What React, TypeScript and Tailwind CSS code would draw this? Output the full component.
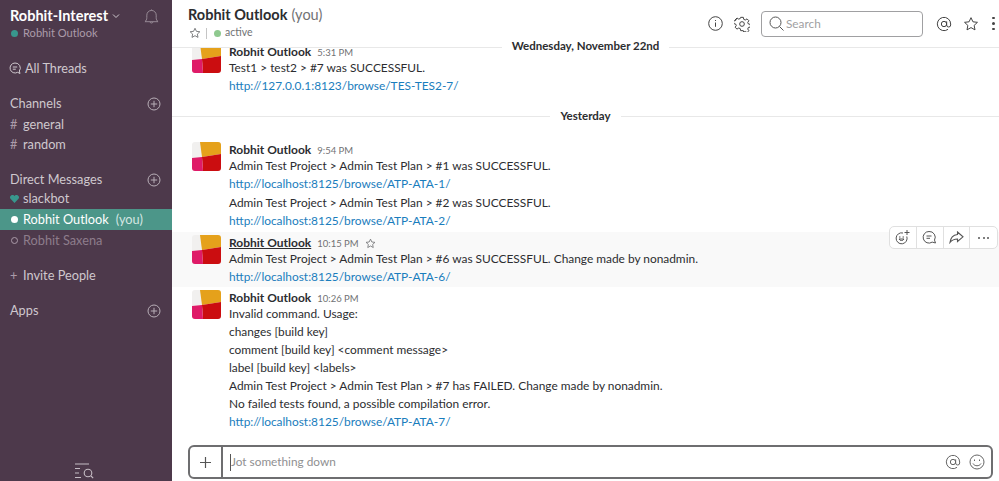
import React from "react";

const Plus = () => (
  <svg width="14" height="14" viewBox="0 0 14 14" fill="none" stroke="#b8aeb7" strokeWidth="1">
    <circle cx="7" cy="7" r="6" />
    <path d="M7 3.8v6.4M3.8 7h6.4" />
  </svg>
);

const Avatar = () => (
  <svg width="29" height="29" viewBox="0 0 29 29" className="shrink-0 rounded-[3px]">
    <rect width="29" height="29" fill="#f1f0ef" />
    <path d="M8 0H29V12L10 15Z" fill="#e5a11b" />
    <path d="M10 15L29 12V29H11Z" fill="#cb0d10" />
    <path d="M0 16L10 15L11 29H0Z" fill="#df1b68" />
  </svg>
);

function Lines({ lines }: { lines: { text: string; link?: boolean }[] }) {
  return (
    <>
      {lines.map((l) => (
        <div key={l.text} className={`text-[11.9px] leading-[18px] ${l.link ? "text-[#1a7dbd]" : "text-[#2c2d30]"}`}>{l.text}</div>
      ))}
    </>
  );
}

function Msg({ time, lines, hover, star }: { time: string; lines: { text: string; link?: boolean }[]; hover?: boolean; star?: boolean }) {
  return (
    <div className={`flex gap-[8px] pl-[20px] ${hover ? "bg-[#f9f9f9] pt-[3px] pb-[1px]" : ""}`}>
      <Avatar />
      <div className="min-w-0 pt-[1px]">
        <div className="flex items-baseline h-[14px] leading-[14px]">
          <span className={`text-[12px] font-bold text-[#2c2d30] ${hover ? "underline" : ""}`}>Robhit Outlook</span>
          <span className="text-[9.5px] text-[#717274] ml-[6px]">{time}</span>
          {star && (
            <svg width="11" height="11" viewBox="0 0 24 24" fill="none" stroke="#717274" strokeWidth="1.8" className="ml-[6px] self-center">
              <path d="M12 2.5l2.9 6.2 6.8.8-5 4.6 1.3 6.7-6-3.400-6 3.400 1.300-6.700-5-4.600 6.800-.8z" />
            </svg>
          )}
        </div>
        <Lines lines={lines} />
      </div>
    </div>
  );
}

function SideRow({ children, active, className = "" }: { children: React.ReactNode; active?: boolean; className?: string }) {
  return (
    <div className={`h-[21px] flex items-center pl-[10px] text-[12.75px] ${active ? "bg-[#4c9689] text-white" : "text-[#cfc8ce]"} ${className}`}>
      {children}
    </div>
  );
}

function SectionHead({ title, className = "" }: { title: string; className?: string }) {
  return (
    <div className={`h-[21px] flex items-center justify-between pl-[10px] pr-[11px] text-[12.75px] text-[#cfc8ce] ${className}`}>
      <span>{title}</span>
      <Plus />
    </div>
  );
}

export default function App() {
  return (
    <div className="flex w-[999px] h-[481px] overflow-hidden bg-white font-['Lato','Open_Sans',sans-serif]">
      <aside className="w-[172px] shrink-0 bg-[#4d394b] flex flex-col relative">
        <div className="pl-[10px] pr-[13px] pt-[6px] flex justify-between">
          <div>
            <div className="flex items-center h-[19px]">
              <span className="text-[14.5px] font-bold text-white">Robhit-Interest</span>
              <svg width="8" height="6" viewBox="0 0 8 6" fill="none" stroke="#cfc8ce" strokeWidth="1" className="ml-[4px]"><path d="M1 1.500l3 3 3-3" /></svg>
            </div>
            <div className="flex items-center h-[15px] mt-[1px] text-[11.1px] text-[#ab9ba9]">
              <span className="w-[7px] h-[7px] rounded-full bg-[#38978d] mr-[5px] ml-[1px]" />
              Robhit Outlook
            </div>
          </div>
          <svg width="15" height="16" viewBox="0 0 16 17" fill="none" stroke="#9c8f9a" strokeWidth="1" className="mt-[3px]">
            <path d="M1 13.500c1.500-1.200 2-2.400 2-4.500V6.500a5 5 0 0 1 10 0V9c0 2.100.5 3.300 2 4.500Z" />
            <path d="M6.300 13.700a1.800 1.800 0 0 0 3.400 0M8 1.500V.5" />
          </svg>
        </div>
        <div className="flex items-center h-[21px] mt-[17px] pl-[9px] text-[12.7px] text-[#cfc8ce]">
          <svg width="12" height="13" viewBox="0 0 12 13" fill="none" stroke="#cfc8ce" strokeWidth="1" className="mr-[4px]">
            <path d="M6 1a5 5 0 1 0 2.600 9.300L11 11.500l-.7-2.500A5 5 0 0 0 6 1Z" />
            <path d="M3.800 5h4.400M3.800 7.200h3" />
          </svg>
          All Threads
        </div>
        <SectionHead title="Channels" className="mt-[14px]" />
        <SideRow><span className="w-[13px] text-[#ab9ba9]">#</span>general</SideRow>
        <SideRow className="-mt-[1px]"><span className="w-[13px] text-[#ab9ba9]">#</span>random</SideRow>
        <SectionHead title="Direct Messages" className="mt-[14px]" />
        <SideRow className="-mt-[2px]">
          <svg width="9" height="8" viewBox="0 0 9 8" className="mr-[4px]" fill="#38978d"><path d="M4.500 8L.5 3.800A2.300 2.300 0 0 1 4.500 1a2.300 2.300 0 0 1 4 2.800Z" /></svg>
          slackbot
        </SideRow>
        <SideRow active>
          <span className="w-[7px] h-[7px] rounded-full bg-white ml-[1px] mr-[5px]" />
          Robhit Outlook
          <span className="ml-[7px] text-[#d5e6e3]">(you)</span>
        </SideRow>
        <SideRow>
          <span className="w-[7px] h-[7px] rounded-full border border-[#ab9ba9] ml-[1px] mr-[5px]" />
          <span className="text-[#8d7d8b]">Robhit Saxena</span>
        </SideRow>
        <SideRow className="mt-[14px]"><span className="w-[13px] text-[#ab9ba9]">+</span>Invite People</SideRow>
        <SectionHead title="Apps" className="mt-[14px]" />
        <div className="mt-auto flex justify-center pb-[2px] pr-[5px]">
          <svg width="20" height="16" viewBox="0 0 20 16" fill="none" stroke="#c6bdc5" strokeWidth="1.100">
            <path d="M1 1h14M1 5.500h5M1 10h4M1 14.500h6" />
            <circle cx="14" cy="10" r="3.800" />
            <path d="M17 13l2.200 2.200" />
          </svg>
        </div>
      </aside>

      <main className="flex-1 min-w-0 flex flex-col relative">
        <header className="h-[48px] shrink-0 border-b border-[#e8e8e8] flex justify-between pl-[16px] pr-[4px] bg-white relative z-10">
          <div className="pt-[5px]">
            <div className="h-[20px] leading-[20px] flex items-baseline text-[14.5px]">
              <span className="font-bold text-[#2c2d30]">Robhit Outlook</span>
              <span className="ml-[4px] text-[#717274]">(you)</span>
            </div>
            <div className="flex items-center h-[14px] mt-[1px] text-[10.5px] text-[#717274]">
              <svg width="12" height="12" viewBox="0 0 24 24" fill="none" stroke="#717274" strokeWidth="1.800" className="ml-[1px]"><path d="M12 2.500l2.900 6.200 6.800.8-5 4.600 1.300 6.700-6-3.400-6 3.400 1.300-6.700-5-4.600 6.800-.8z" /></svg>
              <span className="w-px h-[11px] bg-[#c5c5c5] ml-[5px] mr-[7px]" />
              <span className="w-[7px] h-[7px] rounded-full bg-[#8fc98f] mr-[4px]" />
              active
            </div>
          </div>
          <div className="flex items-center h-[47px]">
            <svg width="15" height="15" viewBox="0 0 15 15" fill="none" stroke="#444" strokeWidth="1"><circle cx="7.500" cy="7.500" r="6.800" /><path d="M7.500 6.500v4.300M7.500 4v1" /></svg>
            <svg width="16" height="16" viewBox="0 0 24 24" fill="none" stroke="#444" strokeWidth="1.500" className="ml-[11px]">
              <circle cx="12" cy="12" r="3.500" />
              <path d="M10 2h4l.6 3 2.300 1 2.600-1.700 2.800 2.800-1.700 2.600 1 2.300 3 .6v4l-3 .6-1 2.300 1.700 2.600-2.800 2.800-2.600-1.700-2.300 1L14 22h-4l-.6-3-2.300-1-2.600 1.700-2.800-2.800 1.700-2.600-1-2.300-3-.6v-4l3-.6 1-2.300L1.700 5.800l2.800-2.800 2.600 1.700 2.300-1z" />
            </svg>
            <div className="ml-[11px] w-[162px] h-[26px] border border-[#a0a0a2] rounded-[4px] flex items-center pl-[7px] text-[11.8px] text-[#a0a0a2]">
              <svg width="15" height="15" viewBox="0 0 15 15" fill="none" stroke="#555" strokeWidth="1" className="mr-[2px]"><circle cx="6.500" cy="6.500" r="5.500" /><path d="M10.500 10.500l4 4" /></svg>
              Search
            </div>
            <svg width="16" height="16" viewBox="0 0 24 24" fill="none" stroke="#444" strokeWidth="1.500" className="ml-[13px]">
              <circle cx="12" cy="12" r="4" />
              <path d="M16 8v5.500a3 3 0 0 0 6 0V12a10 10 0 1 0-4 8" />
            </svg>
            <svg width="16" height="16" viewBox="0 0 24 24" fill="none" stroke="#444" strokeWidth="1.500" className="ml-[11px]"><path d="M12 2.500l2.900 6.200 6.800.8-5 4.600 1.300 6.700-6-3.400-6 3.400 1.300-6.700-5-4.600 6.800-.8z" /></svg>
            <div className="ml-[13px] flex flex-col gap-[3px] w-[3px]">
              <span className="w-[2.500px] h-[2.500px] rounded-full bg-[#444]" />
              <span className="w-[2.500px] h-[2.500px] rounded-full bg-[#444]" />
              <span className="w-[2.500px] h-[2.500px] rounded-full bg-[#444]" />
            </div>
          </div>
        </header>

        <div className="absolute left-0 right-0 top-[38px] flex justify-center z-20">
          <span className="bg-white px-[10px] h-[16px] leading-[16px] text-[11.5px] font-bold text-[#2c2d30]">Wednesday, November 22nd</span>
        </div>

        <div className="flex-1 min-h-0 overflow-hidden">
          <div className="-mt-[4px]">
            <Msg time="5:31 PM" lines={[{ text: "Test1 > test2 > #7 was SUCCESSFUL." }, { text: "http://127.0.0.1:8123/browse/TES-TES2-7/", link: true }]} />
            <div className="flex items-center mt-[13px] mb-[18px] h-[16px]">
              <span className="flex-1 h-px bg-[#e8e8e8]" />
              <span className="px-[10px] text-[11.5px] font-bold text-[#2c2d30]">Yesterday</span>
              <span className="flex-1 h-px bg-[#e8e8e8]" />
            </div>
            <Msg time="9:54 PM" lines={[{ text: "Admin Test Project > Admin Test Plan > #1 was SUCCESSFUL." }, { text: "http://localhost:8125/browse/ATP-ATA-1/", link: true }]} />
            <div className="pl-[57px] pt-[1px]">
              <Lines lines={[{ text: "Admin Test Project > Admin Test Plan > #2 was SUCCESSFUL." }, { text: "http://localhost:8125/browse/ATP-ATA-2/", link: true }]} />
            </div>
            <div className="mt-[2px]">
              <Msg hover star time="10:15 PM" lines={[{ text: "Admin Test Project > Admin Test Plan > #6 was SUCCESSFUL. Change made by nonadmin." }, { text: "http://localhost:8125/browse/ATP-ATA-6/", link: true }]} />
            </div>
            <div className="mt-[3px]">
              <Msg time="10:26 PM" lines={[{ text: "Invalid command. Usage:" }, { text: "changes [build key]" }, { text: "comment [build key] <comment message>" }, { text: "label [build key] <labels>" }]} />
            </div>
            <div className="pl-[57px]">
              <Lines lines={[{ text: "Admin Test Project > Admin Test Plan > #7 has FAILED. Change made by nonadmin." }, { text: "No failed tests found, a possible compilation error." }, { text: "http://localhost:8125/browse/ATP-ATA-7/", link: true }]} />
            </div>
          </div>
        </div>

        <div className="absolute right-[1px] top-[226px] h-[23px] w-[109px] bg-white border border-[#e0e0e0] rounded-[5px] grid grid-cols-4 divide-x divide-[#e0e0e0]">
          <div className="flex items-center justify-center">
            <svg width="16" height="15" viewBox="0 0 16 15" fill="none" stroke="#555" strokeWidth="1"><path d="M11.800 6.500A5.500 5.500 0 1 1 8 3" /><path d="M4 7h1.500M7.500 7H9M4 9c.8 2 4.200 2 5 0ZM12 0v5M9.500 2.500h5" /></svg>
          </div>
          <div className="flex items-center justify-center">
            <svg width="15" height="15" viewBox="0 0 15 15" fill="none" stroke="#555" strokeWidth="1"><path d="M7 1.500a5.800 5.800 0 1 0 3.200 10.600l3.300.9-1-2.900A5.800 5.800 0 0 0 7 1.500Z" /><path d="M4.500 6h5M4.500 8.300h3.500" /></svg>
          </div>
          <div className="flex items-center justify-center">
            <svg width="15" height="13" viewBox="0 0 15 13" fill="none" stroke="#555" strokeWidth="1.100"><path d="M8.500 1l5.500 4.800-5.500 4.700V8C5 8 3 9 1 11.500 1.500 7 4 4 8.500 3.500Z" /></svg>
          </div>
          <div className="flex items-center justify-center gap-[2.500px]">
            <span className="w-[2px] h-[2px] rounded-full bg-[#555]" />
            <span className="w-[2px] h-[2px] rounded-full bg-[#555]" />
            <span className="w-[2px] h-[2px] rounded-full bg-[#555]" />
          </div>
        </div>

        <div className="shrink-0 ml-[16px] mr-[6px] mb-[2px] h-[34px] border-2 border-[#6e6e70] rounded-[6px] flex items-center overflow-hidden">
          <div className="w-[33px] h-full border-r-2 border-[#6e6e70] flex items-center justify-center">
            <svg width="13" height="13" viewBox="0 0 13 13" stroke="#555" strokeWidth="1.200"><path d="M6.500 1v11M1 6.500h11" /></svg>
          </div>
          <span className="w-px h-[17px] bg-[#555] ml-[7px]" />
          <span className="flex-1 text-[11.8px] text-[#8f8f91]">Jot something down</span>
          <svg width="16" height="16" viewBox="0 0 24 24" fill="none" stroke="#666" strokeWidth="1.500"><circle cx="12" cy="12" r="4" /><path d="M16 8v5.500a3 3 0 0 0 6 0V12a10 10 0 1 0-4 8" /></svg>
          <svg width="16" height="16" viewBox="0 0 16 16" fill="none" stroke="#666" strokeWidth="1" className="ml-[8px] mr-[6px]"><circle cx="8" cy="8" r="7" /><path d="M5.500 5.500v1.500M10.500 5.500v1.500M4 9.500c1.500 3 6.500 3 8 0" /></svg>
        </div>
      </main>
    </div>
  );
}
